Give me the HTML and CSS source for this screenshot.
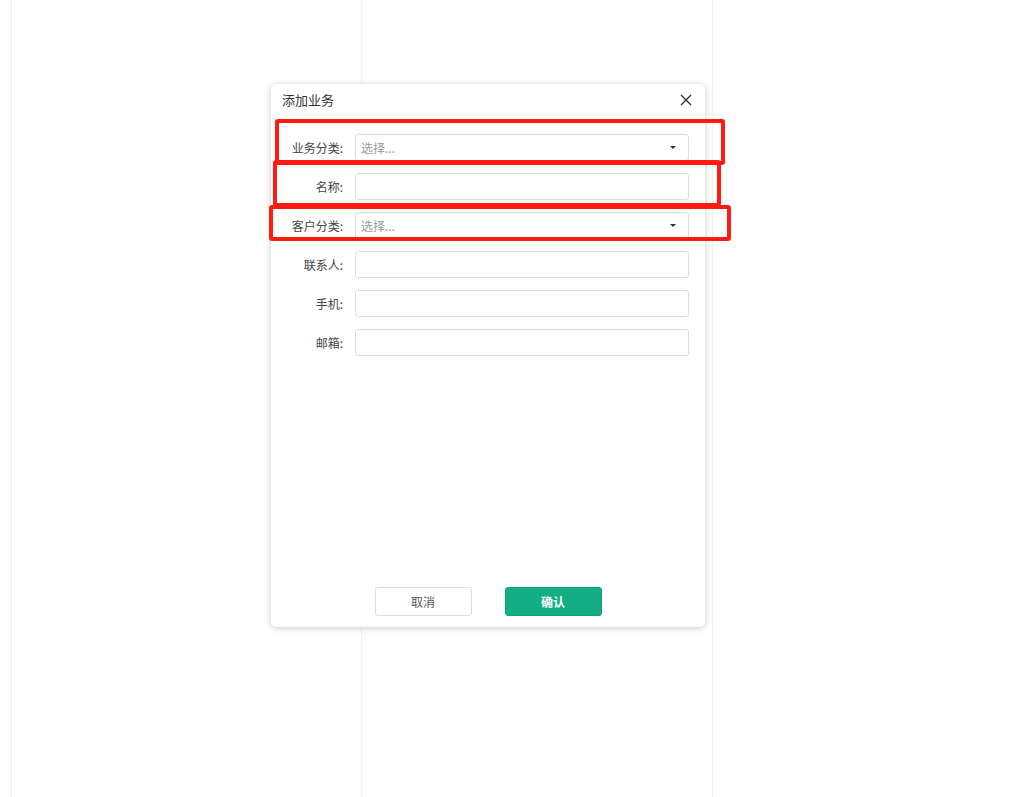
FILE: index.html
```html
<!DOCTYPE html>
<html lang="zh-CN">

<head>
    <meta charset="UTF-8">
    <meta name="viewport" content="width=device-width, initial-scale=1.0">
    <title>添加业务</title>
    <link rel="stylesheet" href="styles.css">
</head>

<body>
    <div class="page-columns">
        <div class="page-col"></div>
        <div class="page-col wide"></div>
        <div class="page-col last"></div>
    </div>

    <div class="dialog">
        <div class="dialog-header">
            <span class="dialog-title">添加业务</span>
            <span class="dialog-close">
                <svg width="12" height="12" viewBox="0 0 12 12"><path d="M1 1L11 11M11 1L1 11" stroke="#333" stroke-width="1.4" fill="none"/></svg>
            </span>
        </div>

        <div class="dialog-body">
            <div class="form-row">
                <label class="form-label">业务分类:</label>
                <div class="form-input select">
                    <span class="placeholder">选择...</span>
                    <span class="caret"></span>
                </div>
            </div>
            <div class="form-row">
                <label class="form-label">名称:</label>
                <div class="form-input"></div>
            </div>
            <div class="form-row">
                <label class="form-label">客户分类:</label>
                <div class="form-input select">
                    <span class="placeholder">选择...</span>
                    <span class="caret"></span>
                </div>
            </div>
            <div class="form-row">
                <label class="form-label">联系人:</label>
                <div class="form-input"></div>
            </div>
            <div class="form-row">
                <label class="form-label">手机:</label>
                <div class="form-input"></div>
            </div>
            <div class="form-row">
                <label class="form-label">邮箱:</label>
                <div class="form-input"></div>
            </div>
        </div>

        <div class="dialog-footer">
            <button class="btn btn-cancel">取消</button>
            <button class="btn btn-ok">确认</button>
        </div>
    </div>

    <!-- 标注框 -->
    <div class="mark mark-1"></div>
    <div class="mark mark-2"></div>
    <div class="mark mark-3"></div>
</body>

</html>
```

FILE: styles.css
```css
body {
    margin: 0;
    font-family: "Noto Sans CJK SC", "Noto Sans", Arial, sans-serif;
    background: #fff;
    color: #333;
    height: 797px;
    overflow: hidden;
}

.page-columns {
    display: flex;
    height: 797px;
    padding-left: 11px;
}

.page-col {
    width: 350px;
    border-left: 1px solid #f0f0f0;
    box-sizing: border-box;
}

.page-col.wide {
    width: 351px;
}

.page-col.last {
    width: auto;
    flex: 1;
}

/* 弹窗 */
.dialog {
    position: absolute;
    left: 271px;
    top: 84px;
    width: 434px;
    height: 543px;
    background: #fff;
    border-radius: 5px;
    box-shadow: 0 1px 6px rgba(0, 0, 0, 0.22);
    display: flex;
    flex-direction: column;
    box-sizing: border-box;
}

.dialog-header {
    display: flex;
    justify-content: space-between;
    align-items: center;
    height: 31px;
    padding: 0 13px 0 11px;
}

.dialog-title {
    font-size: 13px;
    color: #333;
}

.dialog-close {
    display: flex;
    cursor: pointer;
}

.dialog-body {
    display: flex;
    flex-direction: column;
    gap: 12px;
    padding: 19px 16px 0 0;
}

.form-row {
    display: flex;
    align-items: center;
}

.form-label {
    width: 72px;
    margin-right: 12px;
    text-align: right;
    font-size: 12px;
    color: #444;
}

.form-input {
    flex: 1;
    height: 27px;
    border: 1px solid #dcdcdc;
    border-radius: 3px;
    box-sizing: border-box;
    display: flex;
    align-items: center;
    padding: 0 5px;
}

.placeholder {
    flex: 1;
    font-size: 12px;
    color: #999;
}

.caret {
    width: 0;
    height: 0;
    border-left: 3px solid transparent;
    border-right: 3px solid transparent;
    border-top: 3px solid #333;
    margin-right: 7px;
}

.dialog-footer {
    margin-top: auto;
    display: flex;
    justify-content: center;
    gap: 33px;
    padding-bottom: 11px;
}

.btn {
    width: 97px;
    height: 29px;
    border-radius: 3px;
    font-family: inherit;
    font-size: 12px;
    cursor: pointer;
}

.btn-cancel {
    background: #fff;
    border: 1px solid #dcdce0;
    color: #555;
}

.btn-ok {
    background: #14ae84;
    border: 1px solid #12a27b;
    color: #fff;
    font-weight: bold;
}

/* 红色标注框 */
.mark {
    position: absolute;
    border: 4px solid #ff1a12;
    border-radius: 3px;
    box-sizing: border-box;
}

.mark-1 {
    left: 275px;
    top: 119px;
    width: 450px;
    height: 46px;
}

.mark-2 {
    left: 273px;
    top: 160px;
    width: 448px;
    height: 47px;
}

.mark-3 {
    left: 269px;
    top: 205px;
    width: 462px;
    height: 36px;
}
```
